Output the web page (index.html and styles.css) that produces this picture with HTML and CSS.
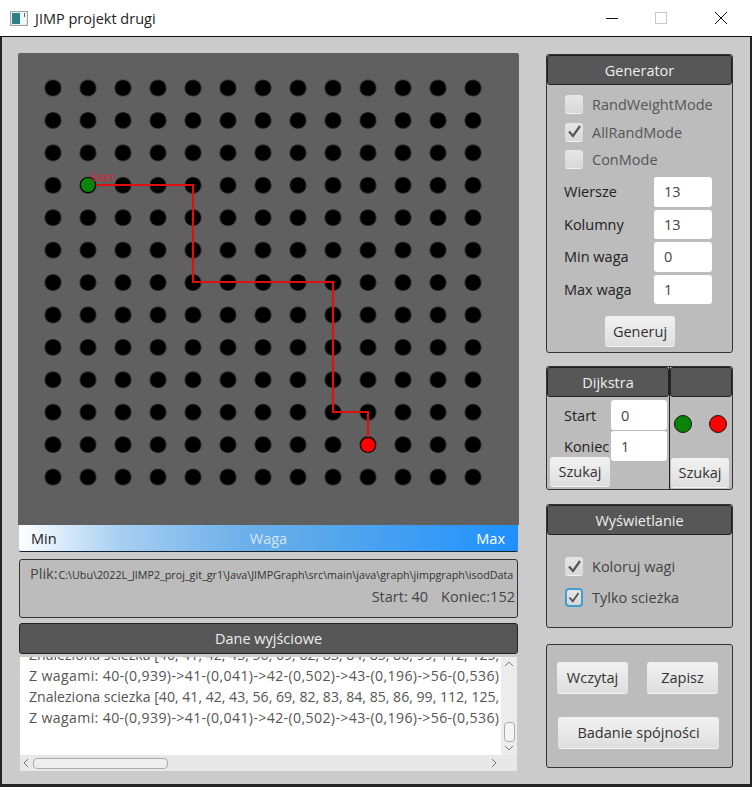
FILE: index.html
```html
<!DOCTYPE html>
<html lang="en">
<head>
    <meta charset="UTF-8">
    <meta name="viewport" content="width=device-width, initial-scale=1.0">
    <title>JIMP projekt drugi</title>
    <link rel="stylesheet" href="styles.css">
</head>
<body>
    <div class="window">
        <header class="titlebar">
            <svg class="app-icon" width="18" height="15" viewBox="0 0 18 15">
                <rect x="0.5" y="0.5" width="17" height="14" fill="#e8eeee" stroke="#9aa4a8"/>
                <rect x="2" y="2" width="8" height="11" fill="#2f7f86"/>
                <rect x="11" y="2" width="5" height="11" fill="#f4f7f5"/>
                <rect x="14" y="2" width="1" height="4" fill="#56686c"/>
            </svg>
            <span class="app-title">JIMP projekt drugi</span>
            <div class="win-controls">
                <svg width="14" height="14" viewBox="0 0 14 14"><path d="M1 7.5H13" stroke="#111" fill="none"/></svg>
                <svg width="14" height="14" viewBox="0 0 14 14"><rect x="1.5" y="1.5" width="11" height="11" stroke="#c8c8c8" fill="none"/></svg>
                <svg class="win-close" width="14" height="14" viewBox="0 0 14 14"><path d="M1 1L13 13M13 1L1 13" stroke="#111" fill="none"/></svg>
            </div>
        </header>

        <main class="app">
            <section class="left-col">
                <svg class="graph" width="501" height="472" viewBox="0 0 501 472">
                    <defs>
                        <pattern id="dots" x="17.5" y="18.79" width="35" height="32.42" patternUnits="userSpaceOnUse">
                            <circle cx="17.5" cy="16.21" r="8.2" fill="#000"/>
                        </pattern>
                    </defs>
                    <rect width="501" height="472" fill="#606060"/>
                    <rect x="17.5" y="18.79" width="455" height="421.5" fill="url(#dots)"/>
                    <polyline points="70,132 175,132 175,229 315,229 315,359 350,359 350,392" fill="none" stroke="#e01010" stroke-width="2.2"/>
                    <circle cx="70" cy="132" r="7.5" fill="#0a850a" stroke="#000"/>
                    <circle cx="350" cy="392" r="7.5" fill="#f00" stroke="#000"/>
                    <text class="graph-label" x="72" y="128">Start</text>
                </svg>
                <div class="legend">
                    <span>Min</span>
                    <span class="legend-mid">Waga</span>
                    <span>Max</span>
                </div>
                <div class="file-box">
                    <div class="file-row"><span class="file-label">Plik:</span><span class="file-path">C:\Ubu\2022L_JIMP2_proj_git_gr1\Java\JIMPGraph\src\main\java\graph\jimpgraph\isodData</span></div>
                    <div class="file-info"><span>Start: 40</span><span>Koniec:152</span></div>
                </div>
                <div class="bar bar-wide">Dane wyjściowe</div>
                <div class="log">
                    <div class="log-main">
                        <div class="log-text">
                            <div>Znaleziona sciezka [40, 41, 42, 43, 56, 69, 82, 83, 84, 85, 86, 99, 112, 125,</div>
                            <div class="log-weights">Z wagami: 40-(0,939)-&gt;41-(0,041)-&gt;42-(0,502)-&gt;43-(0,196)-&gt;56-(0,536)</div>
                            <div>Znaleziona sciezka [40, 41, 42, 43, 56, 69, 82, 83, 84, 85, 86, 99, 112, 125,</div>
                            <div class="log-weights">Z wagami: 40-(0,939)-&gt;41-(0,041)-&gt;42-(0,502)-&gt;43-(0,196)-&gt;56-(0,536)</div>
                        </div>
                        <div class="vscroll">
                            <svg width="10" height="6" viewBox="0 0 10 6"><path d="M1 5L5 1L9 5" stroke="#777" fill="none"/></svg>
                            <div class="vthumb"></div>
                            <svg width="10" height="6" viewBox="0 0 10 6"><path d="M1 1L5 5L9 1" stroke="#777" fill="none"/></svg>
                        </div>
                    </div>
                    <div class="hscroll">
                        <svg width="6" height="10" viewBox="0 0 6 10"><path d="M5 1L1 5L5 9" stroke="#777" fill="none"/></svg>
                        <div class="hthumb"></div>
                        <svg width="6" height="10" viewBox="0 0 6 10"><path d="M1 1L5 5L1 9" stroke="#777" fill="none"/></svg>
                    </div>
                </div>
            </section>

            <aside class="right-col">
                <section class="panel panel-gen">
                    <div class="bar">Generator</div>
                    <div class="gen-body">
                        <label class="check"><span class="box"></span>RandWeightMode</label>
                        <label class="check"><span class="box"><svg width="17" height="17" viewBox="0 0 17 17"><path d="M3 8.5L7 13L14 3" stroke="#555" stroke-width="2.2" fill="none"/></svg></span>AllRandMode</label>
                        <label class="check"><span class="box"></span>ConMode</label>
                        <div class="fields">
                            <span>Wiersze</span><input class="field" value="13">
                            <span>Kolumny</span><input class="field" value="13">
                            <span>Min waga</span><input class="field" value="0">
                            <span>Max waga</span><input class="field" value="1">
                        </div>
                        <button class="btn btn-gen">Generuj</button>
                    </div>
                </section>

                <section class="panel panel-dijkstra">
                    <div class="dij-left">
                        <div class="bar">Dijkstra</div>
                        <div class="dij-form">
                            <span>Start</span><input class="field" value="0">
                            <span>Koniec</span><input class="field" value="1">
                        </div>
                        <button class="btn btn-find">Szukaj</button>
                    </div>
                    <div class="dij-right">
                        <div class="bar"></div>
                        <div class="dots">
                            <span class="dot dot-green"></span>
                            <span class="dot dot-red"></span>
                        </div>
                        <button class="btn btn-find">Szukaj</button>
                    </div>
                </section>

                <section class="panel panel-view">
                    <div class="bar">Wyświetlanie</div>
                    <div class="view-body">
                        <label class="check check-dark"><span class="box"><svg width="17" height="17" viewBox="0 0 17 17"><path d="M3 8.5L7 13L14 3" stroke="#555" stroke-width="2.2" fill="none"/></svg></span>Koloruj wagi</label>
                        <label class="check check-dark"><span class="box box-focus"><svg width="17" height="17" viewBox="0 0 17 17"><path d="M3 8.5L7 13L14 3" stroke="#555" stroke-width="2.2" fill="none"/></svg></span>Tylko scieżka</label>
                    </div>
                </section>

                <section class="panel panel-actions">
                    <div class="action-row">
                        <button class="btn btn-load">Wczytaj</button>
                        <button class="btn btn-load">Zapisz</button>
                    </div>
                    <button class="btn btn-check">Badanie spójności</button>
                </section>
            </aside>
        </main>
    </div>
</body>
</html>
```

FILE: styles.css
```css
html, body {
    margin: 0;
    padding: 0;
    background-color: #fff;
}
body {
    font-family: "Open Sans", "Liberation Sans", sans-serif;
    font-size: 14.5px;
    color: #333;
}
.window {
    width: 752px;
    height: 787px;
    display: flex;
    flex-direction: column;
    box-sizing: border-box;
}
.titlebar {
    height: 36px;
    display: flex;
    align-items: center;
    padding-left: 10px;
    background-color: #fff;
    flex: none;
}
.app-icon {
    margin-right: 7px;
}
.app-title {
    color: #222;
}
.win-controls {
    margin-left: auto;
    display: flex;
    gap: 35px;
    padding-right: 24px;
}
.win-close {
    margin-left: 11px;
}
.app {
    flex: 1;
    display: flex;
    gap: 27px;
    padding: 16px 0 0 16px;
    background-color: #cbcbcb;
    border: 1px solid #222;
    border-width: 1px 2px 3px 2px;
    border-top-color: #111;
}
.left-col {
    width: 501px;
    display: flex;
    flex-direction: column;
}
.graph {
    display: block;
    border-radius: 2px 2px 0 0;
}
.graph-label {
    font-family: "Liberation Sans", sans-serif;
    font-size: 11px;
    fill: #d8283a;
}
.legend {
    height: 26px;
    margin: 0 1px;
    display: flex;
    justify-content: space-between;
    align-items: center;
    padding: 0 13px 0 12px;
    background: linear-gradient(to right, #fff, #a8cff2 20%, #6db0ea 45%, #5aa8ea 60%, #1e90ff);
    border-bottom: 1px solid #123;
    border-radius: 0 0 2px 2px;
}
.legend span:first-child {
    color: #222;
}
.legend span:last-child {
    color: #fff;
}
.legend-mid {
    margin-left: 4px;
    color: #d4e6f8;
}
.file-box {
    height: 59px;
    margin: 7px 1px 0;
    box-sizing: border-box;
    padding: 4px 2px 0 10px;
    background-color: #bcbcbc;
    border: 1px solid #333;
    border-radius: 3px;
}
.file-row {
    display: flex;
    align-items: baseline;
    gap: 1px;
}
.file-label {
    color: #444;
}
.file-path {
    font-size: 10.75px;
    color: #333;
    white-space: nowrap;
}
.file-info {
    display: flex;
    justify-content: flex-end;
    gap: 13px;
    margin-top: 4px;
    color: #444;
}
.bar {
    height: 30px;
    display: flex;
    align-items: center;
    justify-content: center;
    box-sizing: border-box;
    background-color: #575757;
    color: #eee;
    border: 1px solid #222;
    border-radius: 3px;
    flex: none;
}
.bar-wide {
    height: 31px;
    margin: 5px 1px 0;
}
.log {
    margin: 3px 2px 0;
    height: 114px;
    display: flex;
    flex-direction: column;
}
.log-main {
    flex: 1;
    display: flex;
    min-height: 0;
}
.log-text {
    flex: 1;
    min-width: 0;
    overflow: hidden;
    background-color: #fff;
    padding-left: 9px;
    color: #555;
    font-size: 14.1px;
    line-height: 21px;
    white-space: nowrap;
}
.log-text > :first-child {
    margin-top: -13px;
}
.log-weights {
    letter-spacing: 0.38px;
}
.vscroll {
    width: 16px;
    flex: none;
    display: flex;
    flex-direction: column;
    align-items: center;
    justify-content: space-between;
    padding: 4px 0 4px;
    box-sizing: border-box;
    background-color: #ececec;
}
.vthumb {
    width: 11px;
    height: 20px;
    margin-top: 52px;
    box-sizing: border-box;
    background-color: #f4f4f4;
    border: 1px solid #aaa;
    border-radius: 4px;
}
.hscroll {
    height: 16px;
    flex: none;
    display: flex;
    align-items: center;
    padding: 0 20px 0 3px;
    background-color: #e8e8e8;
}
.hthumb {
    width: 135px;
    height: 11px;
    margin-left: 4px;
    margin-right: auto;
    box-sizing: border-box;
    background-color: #eee;
    border: 1px solid #aaa;
    border-radius: 4px;
}
.right-col {
    width: 187px;
    display: flex;
    flex-direction: column;
    padding-top: 1px;
}
.panel {
    box-sizing: border-box;
    background-color: #bcbcbc;
    border: 1px solid #333;
    border-radius: 3px;
}
.panel-gen {
    height: 299px;
}
.gen-body {
    display: flex;
    flex-direction: column;
    padding: 6px 20px 0 18px;
}
.check {
    display: flex;
    align-items: center;
    gap: 9px;
    height: 27.5px;
    color: #555;
    white-space: nowrap;
}
.check-dark {
    color: #444;
    height: 31px;
}
.box {
    width: 18px;
    height: 19px;
    flex: none;
    box-sizing: border-box;
    background: linear-gradient(#e6e6e6, #d8d8d8);
    border-bottom: 1px solid #f2f2f2;
    border-radius: 3px;
    display: flex;
    align-items: center;
    justify-content: center;
}
.box-focus {
    border: 2px solid #3f9fd0;
    border-radius: 4px;
}
.fields {
    display: grid;
    grid-template-columns: 1fr 58px;
    align-items: center;
    row-gap: 3px;
    margin: 3.5px 0 0 -1px;
    color: #222;
}
.fields .field {
    height: 29.5px;
}
.field {
    width: 100%;
    height: 30px;
    box-sizing: border-box;
    border: 0;
    border-radius: 3px;
    padding: 0 0 0 10px;
    margin: 0;
    background-color: #fff;
    font: inherit;
    color: #444;
}
.btn {
    font: inherit;
    color: #333;
    padding: 0;
    box-sizing: border-box;
    background: linear-gradient(#f2f2f2, #dedede);
    border: 0;
    border-bottom: 1px solid #f4f4f4;
    border-radius: 3px;
}
.btn-gen {
    width: 70px;
    height: 31px;
    margin: 12px 0 0 40px;
}
.panel-dijkstra {
    height: 124px;
    margin-top: 13px;
    display: flex;
}
.dij-left {
    width: 122px;
    flex: none;
    border-right: 1px solid #222;
    display: flex;
    flex-direction: column;
    box-sizing: content-box;
    position: relative;
}
.dij-right {
    flex: 1;
    display: flex;
    flex-direction: column;
}
.dij-form {
    display: grid;
    grid-template-columns: 47px 56px;
    align-items: center;
    row-gap: 1px;
    padding: 3px 0 0 17px;
    color: #222;
}
.dij-form .field {
    height: 30px;
}
.btn-find {
    height: 30px;
    width: 60px;
    margin: -4px 0 0 3px;
    position: relative;
}
.dij-right .btn-find {
    width: 58px;
    margin: 0 0 0 1px;
}
.dots {
    height: 61px;
    box-sizing: border-box;
    padding: 0 5px 7px 4px;
    display: flex;
    align-items: center;
    justify-content: space-between;
}
.dot {
    width: 18px;
    height: 18px;
    box-sizing: border-box;
    border: 1px solid #111;
    border-radius: 50%;
}
.dot-green {
    background-color: #0a850a;
}
.dot-red {
    background-color: #f00;
}
.panel-view {
    height: 124px;
    margin-top: 14px;
}
.view-body {
    padding: 16px 18px;
}
.panel-actions {
    height: 124px;
    margin-top: 16px;
    padding: 17px 14px 0 10px;
}
.action-row {
    display: flex;
    justify-content: space-between;
}
.btn-load {
    width: 71px;
    height: 32px;
}
.btn-check {
    width: 161px;
    height: 32px;
    margin: 23px 0 0 1px;
}
```
